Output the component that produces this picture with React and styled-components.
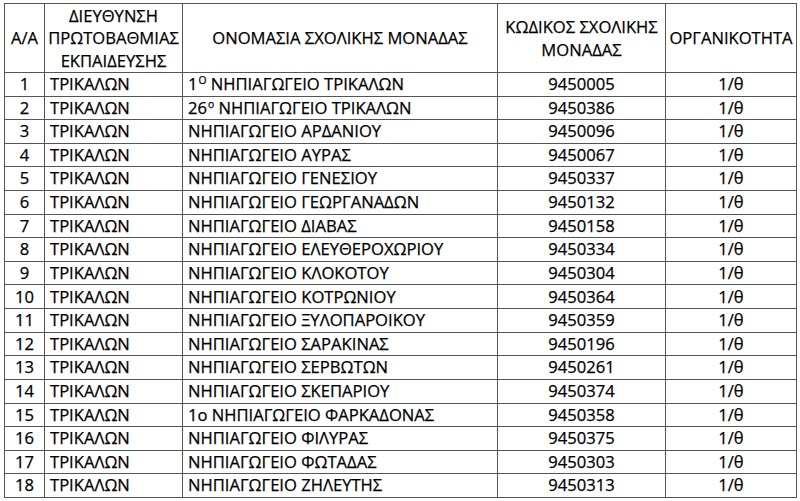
import React from "react";
import styled, { createGlobalStyle } from "styled-components";

const Global = createGlobalStyle`
  html, body { margin: 0; padding: 0; background: #fff; }
  body { font-family: "Open Sans", "Noto Sans", sans-serif; color: #000; }
`;

const Page = styled.div`
  padding: 3px 0 0 4px;
`;

const Grid = styled.div`
  display: grid;
  grid-template-columns: 40px 138px 315px 168px 131px;
  grid-template-rows: 69px repeat(18, 23.61px);
  width: max-content;
  border-top: 1px solid #555;
  border-left: 1px solid #555;
`;

const Cell = styled.div`
  box-sizing: border-box;
  border-right: 1px solid #555;
  border-bottom: 1px solid #555;
  display: flex;
  align-items: center;
  justify-content: ${(p) => (p.$align === "left" ? "flex-start" : "center")};
  text-align: ${(p) => (p.$align === "left" ? "left" : "center")};
  padding-left: ${(p) => (p.$align === "left" ? "5px" : "0")};
  font-size: 16.6px;
  line-height: 22.5px;
  white-space: nowrap;
  overflow: hidden;
  -webkit-text-stroke: 0.25px #000;
`;

const HeadCell = styled(Cell)`
  line-height: 22.6px;
  padding-top: 1px;
`;

const Text = styled.span`
  display: block;
`;

const Sup = styled.span`
  font-size: 0.62em;
  line-height: 0;
  position: relative;
  top: -0.55em;
  margin-left: 1px;
`;

const rows = [
  [<>1<Sup>Ο</Sup> ΝΗΠΙΑΓΩΓΕΙΟ ΤΡΙΚΑΛΩΝ</>, "9450005"],
  [<>26<Sup>ο</Sup> ΝΗΠΙΑΓΩΓΕΙΟ ΤΡΙΚΑΛΩΝ</>, "9450386"],
  ["ΝΗΠΙΑΓΩΓΕΙΟ ΑΡΔΑΝΙΟΥ", "9450096"],
  ["ΝΗΠΙΑΓΩΓΕΙΟ ΑΥΡΑΣ", "9450067"],
  ["ΝΗΠΙΑΓΩΓΕΙΟ ΓΕΝΕΣΙΟΥ", "9450337"],
  ["ΝΗΠΙΑΓΩΓΕΙΟ ΓΕΩΡΓΑΝΑΔΩΝ", "9450132"],
  ["ΝΗΠΙΑΓΩΓΕΙΟ ΔΙΑΒΑΣ", "9450158"],
  ["ΝΗΠΙΑΓΩΓΕΙΟ ΕΛΕΥΘΕΡΟΧΩΡΙΟΥ", "9450334"],
  ["ΝΗΠΙΑΓΩΓΕΙΟ ΚΛΟΚΟΤΟΥ", "9450304"],
  ["ΝΗΠΙΑΓΩΓΕΙΟ ΚΟΤΡΩΝΙΟΥ", "9450364"],
  ["ΝΗΠΙΑΓΩΓΕΙΟ ΞΥΛΟΠΑΡΟΙΚΟΥ", "9450359"],
  ["ΝΗΠΙΑΓΩΓΕΙΟ ΣΑΡΑΚΙΝΑΣ", "9450196"],
  ["ΝΗΠΙΑΓΩΓΕΙΟ ΣΕΡΒΩΤΩΝ", "9450261"],
  ["ΝΗΠΙΑΓΩΓΕΙΟ ΣΚΕΠΑΡΙΟΥ", "9450374"],
  ["1ο ΝΗΠΙΑΓΩΓΕΙΟ ΦΑΡΚΑΔΟΝΑΣ", "9450358"],
  ["ΝΗΠΙΑΓΩΓΕΙΟ ΦΙΛΥΡΑΣ", "9450375"],
  ["ΝΗΠΙΑΓΩΓΕΙΟ ΦΩΤΑΔΑΣ", "9450303"],
  ["ΝΗΠΙΑΓΩΓΕΙΟ ΖΗΛΕΥΤΗΣ", "9450313"],
];

export default function App() {
  return (
    <Page>
      <Global />
      <Grid>
        <HeadCell>Α/Α</HeadCell>
        <HeadCell>
          <Text>
            ΔΙΕΥΘΥΝΣΗ
            <br />
            ΠΡΩΤΟΒΑΘΜΙΑΣ
            <br />
            ΕΚΠΑΙΔΕΥΣΗΣ
          </Text>
        </HeadCell>
        <HeadCell>ΟΝΟΜΑΣΙΑ ΣΧΟΛΙΚΗΣ ΜΟΝΑΔΑΣ</HeadCell>
        <HeadCell>
          <Text>
            ΚΩΔΙΚΟΣ ΣΧΟΛΙΚΗΣ
            <br />
            ΜΟΝΑΔΑΣ
          </Text>
        </HeadCell>
        <HeadCell>ΟΡΓΑΝΙΚΟΤΗΤΑ</HeadCell>
        {rows.map(([name, code], i) => (
          <React.Fragment key={i}>
            <Cell>{i + 1}</Cell>
            <Cell $align="left">ΤΡΙΚΑΛΩΝ</Cell>
            <Cell $align="left">
              <Text>{name}</Text>
            </Cell>
            <Cell>{code}</Cell>
            <Cell>1/θ</Cell>
          </React.Fragment>
        ))}
      </Grid>
    </Page>
  );
}
